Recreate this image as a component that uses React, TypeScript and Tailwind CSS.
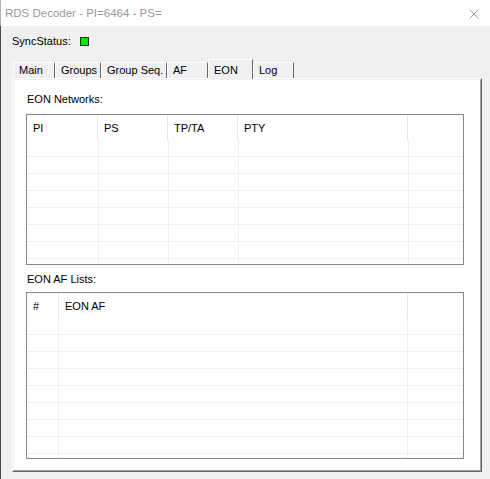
type Col = { label: string; hw: number; bw: number };

const NETWORK_COLS: Col[] = [
  { label: 'PI', hw: 71, bw: 72 },
  { label: 'PS', hw: 70, bw: 70 },
  { label: 'TP/TA', hw: 70, bw: 70 },
  { label: 'PTY', hw: 170, bw: 170 },
];

const AF_COLS: Col[] = [
  { label: '#', hw: 32, bw: 32 },
  { label: 'EON AF', hw: 349, bw: 349 },
];

const TABS = [
  { label: 'Main', w: 42 },
  { label: 'Groups', w: 46 },
  { label: 'Group Seq.', w: 66 },
  { label: 'AF', w: 41 },
  { label: 'EON', w: 45, active: true },
  { label: 'Log', w: 41 },
];

function ListBox({ cols, rows, height }: { cols: Col[]; rows: number; height: number }) {
  return (
    <div
      className="ml-[12px] w-[438px] border border-[#828790] bg-white overflow-hidden flex flex-col"
      style={{ height }}
    >
      {/* column headers */}
      <div className="flex h-[25px] shrink-0">
        {cols.map((c) => (
          <div
            key={c.label}
            className="flex items-center pl-[6px] border-r border-[#e5e5e5] mt-[1px] shrink-0"
            style={{ width: c.hw }}
          >
            {c.label}
          </div>
        ))}
        <div className="flex-1" />
      </div>

      {/* empty grid rows */}
      {Array.from({ length: rows }).map((_, i) => (
        <div key={i} className="flex h-[17px] shrink-0 border-b border-[#f0f0f0]">
          {cols.map((c) => (
            <div
              key={c.label}
              className="border-r border-[#f0f0f0] shrink-0"
              style={{ width: c.bw }}
            />
          ))}
          <div className="flex-1" />
        </div>
      ))}
    </div>
  );
}

export default function App() {
  return (
    <div className="w-[490px] h-[479px] flex flex-col font-['Liberation_Sans',Arial,sans-serif] text-[11px] leading-[15px] text-black overflow-hidden">
      {/* Title bar */}
      <div className="h-[26px] shrink-0 bg-white flex items-center justify-between pl-[4px] pr-[11px] border-l border-[#b4b4b4]">
        <span className="text-[#999999] text-[11.5px]">RDS Decoder - PI=6464 - PS=</span>
        <svg width="10" height="10" viewBox="0 0 10 10" className="mt-[1px]">
          <path d="M0.5 0.5 L9.5 9.5 M9.5 0.5 L0.5 9.5" stroke="#999999" strokeWidth="1" fill="none" />
        </svg>
      </div>

      {/* Body */}
      <div className="flex-1 bg-[#f0f0f0] border-l border-[#4a4a4a] flex flex-col">
        {/* Sync status */}
        <div className="mt-[8px] h-[15px] flex items-center pl-[11px]">
          <span className="w-[68px]">SyncStatus:</span>
          <span className="w-[9px] h-[9px] border border-[#2a2a2a] bg-[#00e800]" />
        </div>

        {/* Tabs */}
        <div className="mt-[10px] h-[19px] flex items-end pl-[12px] relative z-10">
          {TABS.map((t) =>
            t.active ? (
              <div
                key={t.label}
                className="h-[20px] -mb-[1px] bg-[#f0f0f0] border-l border-t border-r border-white border-r-[#696969] pl-[5px] pt-[2px] flex items-start"
                style={{ width: t.w }}
              >
                <span className="mt-[1px]">{t.label}</span>
              </div>
            ) : (
              <div
                key={t.label}
                className="h-[16px] bg-[#f0f0f0] border-l border-t border-r border-white border-r-[#696969] pl-[5px] flex items-center"
                style={{ width: t.w }}
              >
                {t.label}
              </div>
            )
          )}
        </div>

        {/* Tab page */}
        <div className="ml-[11px] w-[470px] h-[394px] border border-white border-r-[#696969] border-b-[#696969]">
          <div className="h-full border border-[#f0f0f0] border-r-[#a0a0a0] border-b-[#a0a0a0] bg-white flex flex-col">
            <div className="mt-[12px] ml-[13px] h-[15px]">EON Networks:</div>
            <div className="mt-[7px]">
              <ListBox cols={NETWORK_COLS} rows={8} height={151} />
            </div>
            <div className="mt-[7px] ml-[13px] h-[15px]">EON AF Lists:</div>
            <div className="mt-[5px]">
              <ListBox cols={AF_COLS} rows={9} height={167} />
            </div>
          </div>
        </div>
      </div>
    </div>
  );
}
